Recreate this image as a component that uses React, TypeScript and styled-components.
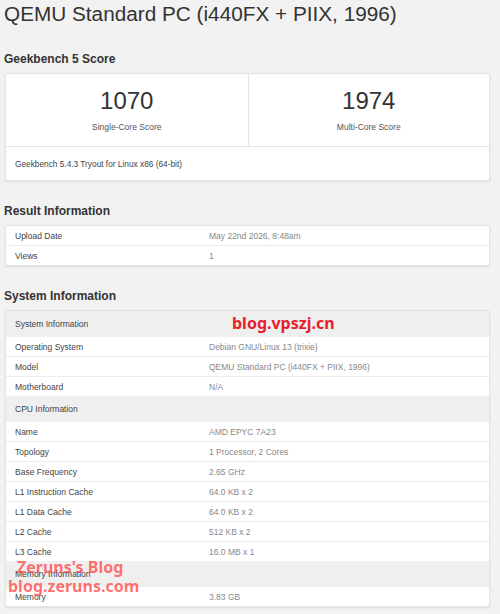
import React from "react";
import styled, { createGlobalStyle } from "styled-components";

const GlobalStyle = createGlobalStyle`
  html, body {
    margin: 0;
    padding: 0;
    background: #f2f2f2;
    font-family: "Liberation Sans", Arial, sans-serif;
    color: #333;
  }
`;

interface Row {
  label: string;
  value?: string;
  header?: boolean;
}

const resultRows: Row[] = [
  { label: "Upload Date", value: "May 22nd 2026, 8:48am" },
  { label: "Views", value: "1" },
];

const systemRows: Row[] = [
  { label: "System Information", header: true },
  { label: "Operating System", value: "Debian GNU/Linux 13 (trixie)" },
  { label: "Model", value: "QEMU Standard PC (i440FX + PIIX, 1996)" },
  { label: "Motherboard", value: "N/A" },
  { label: "CPU Information", header: true },
  { label: "Name", value: "AMD EPYC 7A23" },
  { label: "Topology", value: "1 Processor, 2 Cores" },
  { label: "Base Frequency", value: "2.65 GHz" },
  { label: "L1 Instruction Cache", value: "64.0 KB x 2" },
  { label: "L1 Data Cache", value: "64.0 KB x 2" },
  { label: "L2 Cache", value: "512 KB x 2" },
  { label: "L3 Cache", value: "16.0 MB x 1" },
  { label: "Memory Information", header: true },
  { label: "Memory", value: "3.83 GB" },
];

const InfoTable = ({ rows }: { rows: Row[] }) => (
  <Card>
    {rows.map((r) =>
      r.header ? (
        <HeaderRow key={r.label}>{r.label}</HeaderRow>
      ) : (
        <DataRow key={r.label}>
          <Label>{r.label}</Label>
          <Value>{r.value}</Value>
        </DataRow>
      )
    )}
  </Card>
);

const App = () => {
  return (
    <Page>
      <GlobalStyle />
      <Title>QEMU Standard PC (i440FX + PIIX, 1996)</Title>

      <Heading>Geekbench 5 Score</Heading>
      <Card>
        <Scores>
          <ScoreCell>
            <ScoreNum>1070</ScoreNum>
            <ScoreLabel>Single-Core Score</ScoreLabel>
          </ScoreCell>
          <ScoreCell>
            <ScoreNum>1974</ScoreNum>
            <ScoreLabel>Multi-Core Score</ScoreLabel>
          </ScoreCell>
        </Scores>
        <Footer>Geekbench 5.4.3 Tryout for Linux x86 (64-bit)</Footer>
      </Card>

      <Heading>Result Information</Heading>
      <InfoTable rows={resultRows} />

      <Heading>System Information</Heading>
      <InfoTable rows={systemRows} />

      <SiteMark>blog.vpszj.cn</SiteMark>
      <BlogMark>
        <span>Zeruns's Blog</span>
        <span>blog.zeruns.com</span>
      </BlogMark>
    </Page>
  );
};

export default App;

const Page = styled.div`
  position: relative;
  width: 500px;
  height: 614px;
  padding: 0 10px 0 4px;
  box-sizing: border-box;
  overflow: hidden;
`;

const Title = styled.h1`
  margin: 0 0 3px 0;
  padding-top: 2px;
  font-size: 20.75px;
  font-weight: normal;
  line-height: 24px;
  color: #333;
`;

const Heading = styled.h3`
  margin: 0;
  font-size: 12px;
  font-weight: bold;
  line-height: 16px;
  color: #333;
  padding: 22px 0 6px 0;
`;

const Card = styled.div`
  background: #fff;
  border: 1px solid #e4e4e4;
  border-radius: 2px;
  box-shadow: 0 1px 2px rgba(0, 0, 0, 0.1);
  margin-left: 1px;
`;

const Scores = styled.div`
  display: grid;
  grid-template-columns: 1fr 1fr;
  height: 72px;
  border-bottom: 1px solid #e4e4e4;
`;

const ScoreCell = styled.div`
  display: flex;
  flex-direction: column;
  align-items: center;
  padding-top: 13px;
  & + & {
    border-left: 1px solid #e4e4e4;
  }
`;

const ScoreNum = styled.div`
  font-size: 24px;
  line-height: 28px;
  color: #333;
`;

const ScoreLabel = styled.div`
  font-size: 8.5px;
  line-height: 12px;
  margin-top: 6px;
  color: #555;
`;

const Footer = styled.div`
  height: 33px;
  display: flex;
  align-items: center;
  padding-left: 9px;
  font-size: 8.3px;
  color: #444;
`;

const DataRow = styled.div`
  display: grid;
  grid-template-columns: 194px 1fr;
  height: 19px;
  align-items: center;
  padding-left: 9px;
  font-size: 8.5px;
  & + & {
    border-top: 1px solid #ececec;
  }
`;

const HeaderRow = styled.div`
  height: 26px;
  display: flex;
  align-items: center;
  padding-left: 9px;
  background: #efefef;
  font-size: 8.5px;
  color: #444;
`;

const Label = styled.span`
  color: #444;
`;

const Value = styled.span`
  color: #888;
`;

const SiteMark = styled.div`
  position: absolute;
  left: 232px;
  top: 313px;
  font-size: 16px;
  font-weight: bold;
  color: #e8202a;
  font-family: "Noto Sans", "Liberation Sans", sans-serif;
  line-height: 20px;
`;

const BlogMark = styled.div`
  position: absolute;
  left: 8px;
  top: 558px;
  display: flex;
  flex-direction: column;
  align-items: flex-start;
  font-family: "Noto Sans", "Liberation Sans", sans-serif;
  font-weight: bold;
  font-size: 16px;
  line-height: 19px;
  color: rgba(255, 60, 60, 0.72);
  & span:first-child {
    margin-left: 9px;
  }
`;
